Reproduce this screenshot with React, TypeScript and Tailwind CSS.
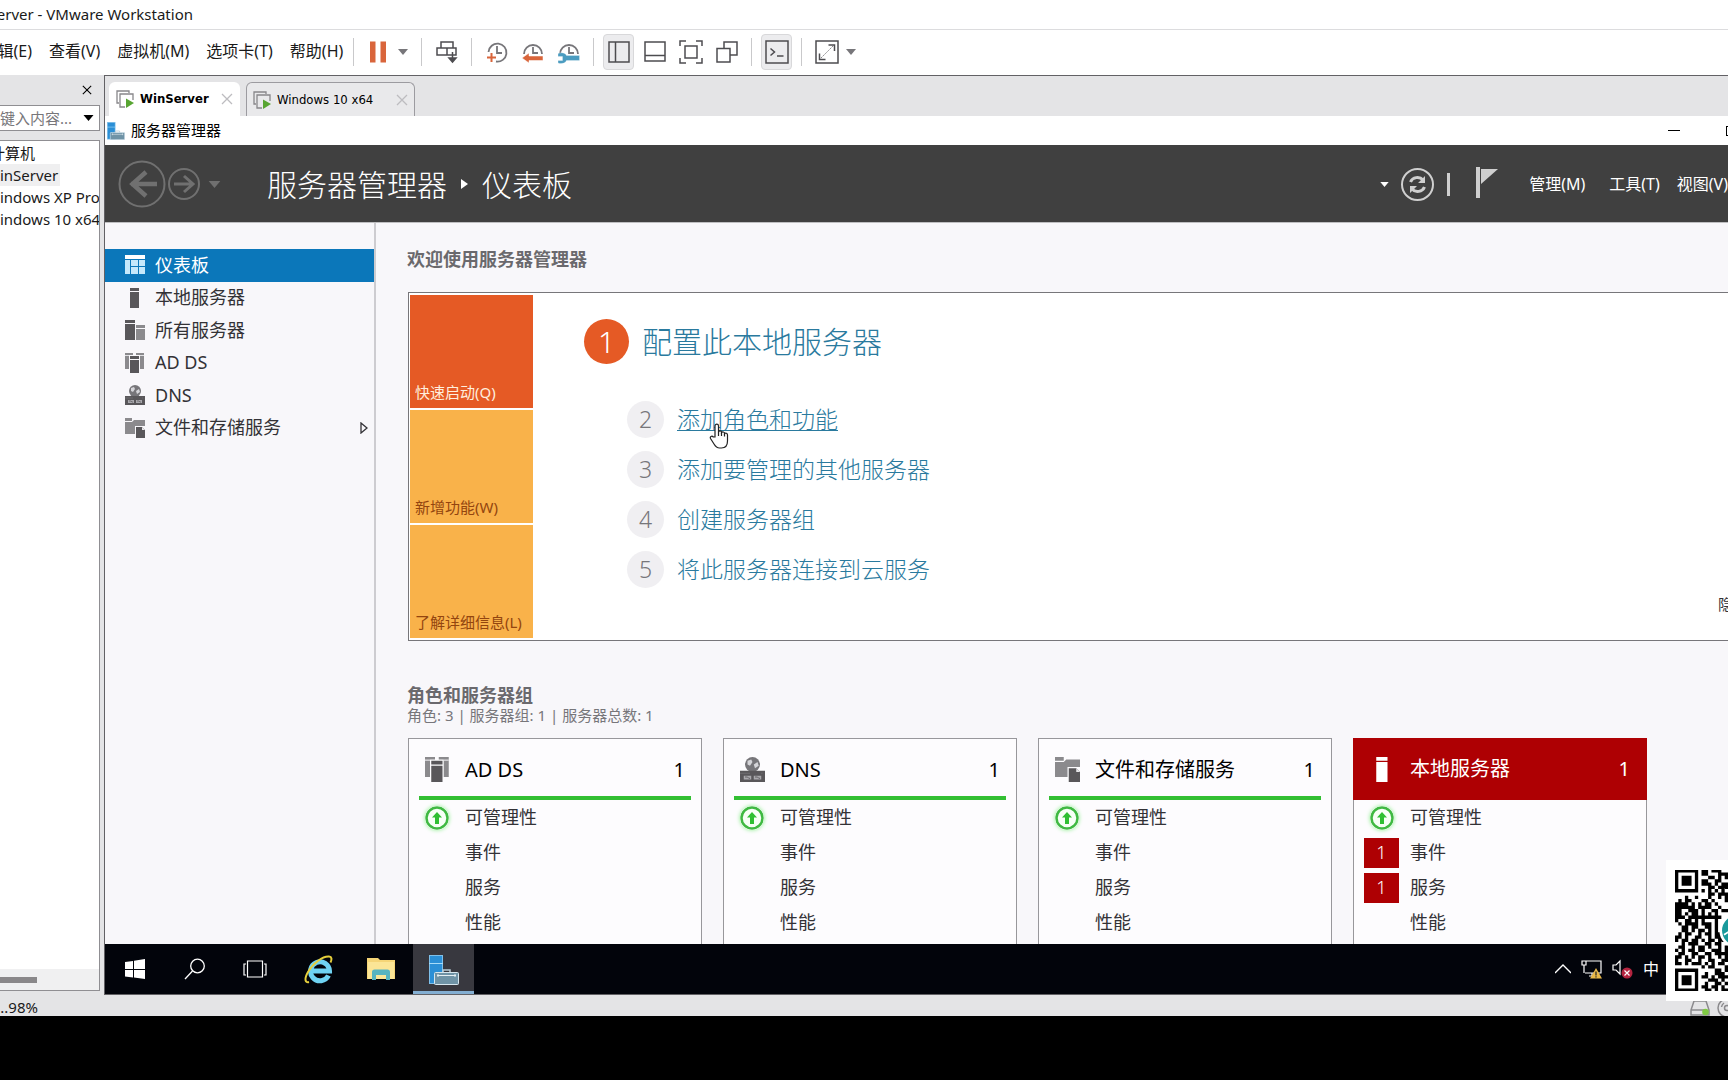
import type { ReactNode } from "react";
import { clsx } from "clsx";

type IconProps = { className?: string };

/* ---------- server manager icons ---------- */

function DashboardIcon({ className }: IconProps) {
  return (
    <svg className={className} viewBox="0 0 20 20" fill="#c5e8fb">
      <rect width="20" height="4" fill="#fff" />
      <rect y="5" width="5" height="14" />
      <rect x="6" y="5" width="7" height="6" />
      <rect x="14" y="5" width="6" height="6" />
      <rect x="6" y="12" width="7" height="7" />
      <rect x="14" y="12" width="6" height="7" />
    </svg>
  );
}

function ServerIcon({ className }: IconProps) {
  return (
    <svg className={className} viewBox="0 0 20 20" fill="currentColor">
      <rect x="5" width="9" height="3" />
      <rect x="5" y="4" width="9" height="16" />
    </svg>
  );
}

function ServersIcon({ className }: IconProps) {
  return (
    <svg className={className} viewBox="0 0 20 20">
      <g fill="#59575a">
        <rect width="10" height="3" />
        <rect y="4" width="10" height="16" />
      </g>
      <g fill="#8b8a8d">
        <rect x="11" y="5" width="9" height="3" />
        <rect x="11" y="9" width="9" height="11" />
      </g>
    </svg>
  );
}

function AdIcon({ className }: IconProps) {
  return (
    <svg className={className} viewBox="0 0 20 20">
      <g fill="#8b8a8d">
        <path d="M0 0h8v2H4v14H0zM0 3h4v1H0z" />
        <path d="M11 0h8v16h-4V2h-4z" />
      </g>
      <path d="M0 2.5h4M15 2.5h4" stroke="#f8f7fa" strokeWidth="0.8" />
      <rect x="5" y="3" width="9" height="3" fill="#59575a" />
      <rect x="5" y="7" width="9" height="13" fill="#59575a" />
    </svg>
  );
}

function DnsIcon({ className }: IconProps) {
  return (
    <svg className={className} viewBox="0 0 20 20">
      <circle cx="10" cy="6" r="6" fill="#77767a" />
      <path d="M6 3l3-1 1 2-2 3-2-1zM11 6l3-2 1 3-3 2z" fill="#d5d5d9" />
      <rect y="11" width="20" height="9" fill="#59575a" />
      <path d="M3 15h6v3H3zM11 15h6v3h-6z" fill="#a9a8ac" />
      <path d="M4 16h2l1 1h1M12 16h2l1 1h1" stroke="#59575a" strokeWidth="0.7" fill="none" />
      <path d="M0 13h8M17 13h1" stroke="#77767a" strokeWidth="0.6" />
    </svg>
  );
}

function StorageIcon({ className }: IconProps) {
  return (
    <svg className={className} viewBox="0 0 20 20">
      <path d="M0 0h7v3H0zM0 4h7l2-2h11v6h-10v8H0z" fill="#8b8a8d" />
      <path d="M11 9h6l3 3v8h-9z" fill="#59575a" />
      <path d="M17 9v3h3z" fill="#e8e7ea" />
    </svg>
  );
}

function ServerManagerIcon({ className }: IconProps) {
  return (
    <svg className={className} viewBox="0 0 30 30">
      <rect x="0.5" y="0.5" width="13" height="28" fill="#2b8fd6" stroke="#7fc0ea" />
      <path d="M0 8.500h14" stroke="#a8dcf8" />
      <path d="M14 18v-3h7v3" fill="none" stroke="#b9cdd8" strokeWidth="1.500" />
      <rect x="5.500" y="17.500" width="24" height="12" rx="1" fill="#6f93a6" stroke="#d6e6ee" />
      <path d="M8 20.500h19M9 22v-3M26 22v-3" stroke="#e4eff4" />
    </svg>
  );
}

function OnlineIcon() {
  return (
    <svg className="size-6 rounded-full shadow-[0_0_4px_#8df08d]" viewBox="0 0 24 24">
      <circle cx="12" cy="12" r="10.500" fill="#f6fff6" stroke="#3fb942" strokeWidth="2.500" />
      <path d="M12 6l5 5.500h-3V18h-4v-6.500H7z" fill="#2fbf33" />
    </svg>
  );
}

/* ---------- workstation toolbar icons ---------- */

function Caret({ className }: IconProps) {
  return (
    <svg className={className} viewBox="0 0 10 6" fill="currentColor">
      <path d="M0 0h10L5 6z" />
    </svg>
  );
}

function ToolIcon({ children }: { children: ReactNode }) {
  return (
    <svg className="size-6" viewBox="0 0 24 24" fill="none" stroke="#4d4c50" strokeWidth="1.500">
      {children}
    </svg>
  );
}

function ClockFace() {
  return (
    <>
      <path d="M3 14a9 9 0 1 1 18 0" stroke="#77767a" strokeWidth="1.800" />
      <path d="M12 7v6h5" stroke="#77767a" strokeWidth="1.800" />
    </>
  );
}

function PauseIcon() {
  return (
    <ToolIcon>
      <path d="M3 1.500h5.500v21H3zM13.500 1.500H19v21h-5.500z" fill="#d9653b" stroke="none" />
    </ToolIcon>
  );
}

function SendKeysIcon() {
  return (
    <ToolIcon>
      <path d="M6 8V2h12v6M2 8h19v7H2zM12 8v7" />
      <path d="M17.500 12v9M14 18l3.500 4 3.500-4z" fill="#4d4c50" />
    </ToolIcon>
  );
}

function SnapshotIcon() {
  return (
    <ToolIcon>
      <path d="M3.500 12a9 9 0 1 1 7.500 9.500" stroke="#77767a" strokeWidth="1.800" />
      <path d="M12 6v7h5" stroke="#77767a" strokeWidth="1.800" />
      <path d="M2 17.500h9M6.500 13v9" stroke="#d9653b" strokeWidth="2" />
    </ToolIcon>
  );
}

function RevertIcon() {
  return (
    <ToolIcon>
      <ClockFace />
      <path d="M1 18l7-5v3h14v4.500H8V23z" fill="#d9653b" stroke="#fff" strokeWidth="0.500" />
    </ToolIcon>
  );
}

function ManageIcon() {
  return (
    <ToolIcon>
      <ClockFace />
      <path
        d="M1 13.500c3.500-1.500 7.500-.5 8.500 2H22.500v5H9.500c-1 2.800-5 3.800-8.500 2.500v-2.500h4.500v-4H1z"
        fill="#4b9cc0"
        stroke="#fff"
        strokeWidth="0.300"
      />
    </ToolIcon>
  );
}

function LibraryIcon() {
  return (
    <ToolIcon>
      <path d="M2 2h20v20H2zM8.500 2v20" />
    </ToolIcon>
  );
}

function ThumbnailIcon() {
  return (
    <ToolIcon>
      <path d="M2 2h20v19H2zM2 15.500h20" />
    </ToolIcon>
  );
}

function FullscreenIcon() {
  return (
    <ToolIcon>
      <path d="M1 6V1h6M17 1h6v5M23 18v5h-6M7 23H1v-5M6 6h12v12H6z" />
    </ToolIcon>
  );
}

function UnityIcon() {
  return (
    <ToolIcon>
      <path d="M2 8.500h13V22H2zM9 8.500V2h13v13h-7" />
    </ToolIcon>
  );
}

function ConsoleIcon() {
  return (
    <ToolIcon>
      <path d="M1 1h22v22H1z" />
      <path d="M5.500 8.500l4 3.500-4 3.500M12 16h6.500" />
    </ToolIcon>
  );
}

function StretchIcon() {
  return (
    <ToolIcon>
      <path d="M1 1h22v22H1z" />
      <path d="M13.500 5h6v6M4.500 13.500v6h6" />
      <path d="M6 18L18 6" strokeWidth="1" strokeDasharray="2 1" stroke="#8b8a8d" />
    </ToolIcon>
  );
}

function VmIcon() {
  return (
    <svg className="size-[18px]" viewBox="0 0 18 18" fill="none" stroke="#88878a" strokeWidth="1.300">
      <path d="M3 13H1V1h12v2" />
      <path d="M9 17H4V4h13v6" />
      <path d="M10 8.500l8 4.500-8 5z" fill="#58a532" stroke="none" />
    </svg>
  );
}

function CloseIcon({ className }: IconProps) {
  return (
    <svg className={className} viewBox="0 0 12 12" fill="none" stroke="currentColor" strokeWidth="1.300">
      <path d="M1 1l10 10M11 1L1 11" />
    </svg>
  );
}

/* ---------- data ---------- */

const toolGroups: { label: string; icon: ReactNode; active?: boolean; menu?: boolean }[][] = [
  [{ label: "暂停", icon: <PauseIcon />, menu: true }],
  [{ label: "发送组合键", icon: <SendKeysIcon /> }],
  [
    { label: "拍摄快照", icon: <SnapshotIcon /> },
    { label: "恢复快照", icon: <RevertIcon /> },
    { label: "管理快照", icon: <ManageIcon /> },
  ],
  [
    { label: "显示库", icon: <LibraryIcon />, active: true },
    { label: "缩略图栏", icon: <ThumbnailIcon /> },
    { label: "全屏", icon: <FullscreenIcon /> },
    { label: "Unity", icon: <UnityIcon /> },
  ],
  [{ label: "控制台视图", icon: <ConsoleIcon />, active: true }],
  [{ label: "拉伸", icon: <StretchIcon />, menu: true }],
];

const navItems = [
  { label: "仪表板", Icon: DashboardIcon, active: true },
  { label: "本地服务器", Icon: ServerIcon },
  { label: "所有服务器", Icon: ServersIcon },
  { label: "AD DS", Icon: AdIcon },
  { label: "DNS", Icon: DnsIcon },
  { label: "文件和存储服务", Icon: StorageIcon, expandable: true },
];

const steps = [
  { n: 2, label: "添加角色和功能", hovered: true },
  { n: 3, label: "添加要管理的其他服务器" },
  { n: 4, label: "创建服务器组" },
  { n: 5, label: "将此服务器连接到云服务" },
];

const cards = [
  { title: "AD DS", Icon: AdIcon },
  { title: "DNS", Icon: DnsIcon },
  { title: "文件和存储服务", Icon: StorageIcon },
  { title: "本地服务器", Icon: ServerIcon, alert: true },
];

// left part of the code, the rest runs off the screen
const qrRows = [
  "#######.##.###..",
  "#.....#.##...###",
  "#.###.#...##.#.#",
  "#.###.#.##..##..",
  "#.###.#.###.#.##",
  "#.....#...##.###",
  "#######.#.#.#.#.",
  "..........##.###",
  "...#..#...#..#.#",
  ".#.##...##.#...#",
  "####.#.#.##.#...",
  "######.####..#..",
  "##..###.#..##.##",
  "##.#.##.#.#.#...",
  "###.##########..",
  "#..##.#.#...#...",
  ".#.####.###.#...",
  "..##.##..##.#...",
  "..##.#.##.#.#...",
  ".#.##..#.##.##..",
  "##.#..##..#.###.",
  "#.##.##.#.##.###",
  "..#.###..##.##..",
  ".##..#.##.#..#.#",
  "#.#.##.##..###.#",
  ".##..##..##.####",
  "##.#.#.##.#..#.#",
  "#..##..#..##..##",
  "##.#.###.#.#.##.",
  "........#.##...#",
  "#######.....##.#",
  "#.....#..#..###.",
  "#.###.#.##.#.###",
  "#.###.#...###.#.",
  "#.###.#..#..##.#",
  "#.....#.##.##.#.",
  "#######..##.#.##",
];

/* ---------- workstation chrome ---------- */

function Toolbar() {
  return (
    <div className="flex items-center">
      {toolGroups.map((group, i) => (
        <div key={i} className="flex items-center">
          <div className="h-7 w-px bg-[#c9c9cb]" />
          <div className="flex items-center gap-[5px] px-[9px]">
            {group.map((tool) => (
              <div key={tool.label} className="flex items-center">
                <button
                  aria-label={tool.label}
                  className={clsx(
                    "flex h-9 w-[31px] items-center justify-center rounded",
                    tool.active && "border border-[#d8d8da] bg-[#ececee]"
                  )}
                >
                  {tool.icon}
                </button>
                {tool.menu && (
                  <button aria-label={tool.label + "选项"} className="flex w-[18px] justify-center text-[#77767a]">
                    <Caret className="h-1.5 w-2.5" />
                  </button>
                )}
              </div>
            ))}
          </div>
        </div>
      ))}
    </div>
  );
}

function MenuBar() {
  return (
    <div className="flex h-[46px] shrink-0 items-center border-t border-[#dcdcde] bg-white pb-0.5">
      <div className="flex w-[353px] shrink-0 items-center gap-[17px] pb-px text-[16px] whitespace-nowrap text-[#1a1a1a]">
        <div className="flex w-8 justify-end overflow-hidden">
          <button className="shrink-0">编辑(E)</button>
        </div>
        <button>查看(V)</button>
        <button>虚拟机(M)</button>
        <button>选项卡(T)</button>
        <button>帮助(H)</button>
      </div>
      <Toolbar />
    </div>
  );
}

function Library() {
  return (
    <aside className="flex w-[104px] shrink-0 flex-col pr-1 pb-1 text-[15px] whitespace-nowrap">
      <div className="flex h-[30px] items-center justify-end pr-2">
        <button aria-label="关闭库">
          <CloseIcon className="size-2.5 text-black" />
        </button>
      </div>
      <div className="flex h-[26px] items-center border border-l-0 border-[#8f8e92] bg-white pr-[5px]">
        <input
          aria-label="在此处键入内容"
          placeholder="键入内容..."
          className="min-w-0 flex-1 text-[15px] outline-none placeholder:text-[#77767a]"
        />
        <button aria-label="展开搜索" className="text-black">
          <Caret className="h-1.5 w-[11px]" />
        </button>
      </div>
      <div className="mt-[9px] flex flex-1 flex-col overflow-hidden border border-l-0 border-[#8f8e92] bg-white">
        <ul className="-ml-3.5 flex-1 pt-px text-[#1a1a1a]">
          <li className="h-[22px] pl-1 leading-[22px]">计算机</li>
          <li className="h-[22px] leading-[22px]">
            <span className="inline-block bg-[#efeff0] pr-0.5">WinServer</span>
          </li>
          <li className="h-[22px] leading-[22px]">Windows XP Professional</li>
          <li className="h-[22px] leading-[22px]">Windows 10 x64</li>
        </ul>
        <div className="flex h-[21px] items-center bg-[#f0f0f1]">
          <div className="h-1.5 w-[37px] bg-[#8a888a]" />
        </div>
      </div>
    </aside>
  );
}

function VmTabs() {
  return (
    <div className="flex h-10 shrink-0 items-end gap-1.5 pl-1 font-['DejaVu_Sans_Condensed','DejaVu_Sans',sans-serif] text-[13px] whitespace-nowrap text-black">
      <div className="flex h-[34px] w-[131px] items-center rounded-t-md bg-white px-[7px]">
        <VmIcon />
        <button className="ml-1.5 font-bold">WinServer</button>
        <button aria-label="关闭 WinServer" className="ml-auto text-[#bdbcc0]">
          <CloseIcon className="size-3" />
        </button>
      </div>
      <div className="flex h-[34px] w-[169px] items-center rounded-t-md border border-b-0 border-[#9c9ba0] bg-[#e9e9eb] px-1.5">
        <VmIcon />
        <button className="ml-1.5">Windows 10 x64</button>
        <button aria-label="关闭 Windows 10 x64" className="ml-auto text-[#bdbcc0]">
          <CloseIcon className="size-3" />
        </button>
      </div>
    </div>
  );
}

/* ---------- guest: server manager ---------- */

function WindowTitle() {
  return (
    <div className="flex h-[29px] shrink-0 items-center overflow-hidden bg-white pl-0.5">
      <ServerManagerIcon className="size-[18px]" />
      <span className="ml-1.5 text-[15px] text-black">服务器管理器</span>
      <button aria-label="最小化" className="ml-auto flex h-full w-[58px] items-center pl-[11px]">
        <span className="h-px w-3 bg-black" />
      </button>
      <button aria-label="最大化" className="flex h-full w-[13px] shrink-0 items-center overflow-hidden pl-[11px]">
        <span className="h-2.5 w-2.5 shrink-0 border border-black" />
      </button>
    </div>
  );
}

function Banner() {
  return (
    <header className="flex h-[77px] shrink-0 items-center bg-[#404040] pt-px pl-[13px] text-white">
      <button aria-label="后退">
        <svg className="size-12" viewBox="0 0 48 48" fill="none" stroke="#707070">
          <circle cx="24" cy="24" r="22.500" strokeWidth="2" />
          <path d="M39 24H13M28 12L14.500 24 28 36" strokeWidth="4.500" />
        </svg>
      </button>
      <button aria-label="前进" className="ml-0.5">
        <svg className="size-8" viewBox="0 0 32 32" fill="none" stroke="#707070">
          <circle cx="16" cy="16" r="15" strokeWidth="2" />
          <path d="M6 16h18M16 8l9 8-9 8" strokeWidth="3" />
        </svg>
      </button>
      <button aria-label="历史记录" className="ml-2 text-[#707070]">
        <Caret className="h-[7px] w-[13px]" />
      </button>
      <h1 className="ml-[46px] flex items-center text-[30px] font-light">
        服务器管理器
        <svg className="mx-3.5 h-2.5 w-[7px]" viewBox="0 0 7 10" fill="#fff">
          <path d="M0 0l7 5-7 5z" />
        </svg>
        仪表板
      </h1>
      <div className="ml-auto flex items-center text-[16px] whitespace-nowrap">
        <Caret className="h-[5px] w-[9px]" />
        <button aria-label="刷新" className="ml-3">
          <svg className="size-[33px]" viewBox="0 0 33 33" fill="none" stroke="#cfcfcf">
            <circle cx="16.500" cy="16.500" r="15.500" strokeWidth="2" />
            <path d="M9.500 14c2-5 9-6 12.500-2M23.500 19c-2 5-9 6-12.500 2" strokeWidth="3" />
            <path d="M24 8v7h-7zM9 25v-7h7z" fill="#cfcfcf" stroke="none" />
          </svg>
        </button>
        <div className="ml-[13px] h-[23px] w-[3px] bg-[#cfcfcf]" />
        <button aria-label="通知" className="ml-[25px]">
          <svg className="h-9 w-6" viewBox="0 0 24 36" fill="#cfcfcf">
            <path d="M1 1h4v31H1zM6 3h17L6 18z" />
          </svg>
        </button>
        <button className="ml-[30px]">管理(M)</button>
        <button className="ml-6">工具(T)</button>
        <button className="ml-[17px]">视图(V)</button>
      </div>
    </header>
  );
}

function SideNav() {
  return (
    <nav className="w-[271px] shrink-0 border-r-2 border-[#cdccd0] pt-[26px]">
      <ul className="grid h-[195px] grid-rows-6">
        {navItems.map(({ label, Icon, active, expandable }) => (
          <li key={label}>
            <a
              href="#"
              className={clsx(
                "flex h-full items-center pl-5 text-[18px]",
                active ? "bg-[#0b77ba] text-white" : "text-[#333236]"
              )}
            >
              <Icon className="size-5 text-[#59575a]" />
              <span className="ml-2.5">{label}</span>
              {expandable && (
                <svg className="mr-1.5 ml-auto h-3 w-2" viewBox="0 0 8 12" fill="none" stroke="#333236" strokeWidth="1.300">
                  <path d="M1 1l6 5-6 5z" />
                </svg>
              )}
            </a>
          </li>
        ))}
      </ul>
    </nav>
  );
}

function HandCursor() {
  return (
    <svg className="absolute top-[21px] left-8 h-[26px] w-5" viewBox="0 0 20 26" fill="#fff" stroke="#222" strokeWidth="1.200">
      <path d="M6 14V3c0-2.500 3.500-2.500 3.500 0v6c.5-1.500 3-1.500 3 .5 1-1 3-.7 3 1 1-.8 3-.5 3 1.500v6c0 4-2 7-6 7h-2c-3 0-4-1.500-5.500-4L1.500 15.500c-1-2 1.500-3 2.800-1.500z" />
      <path d="M9.500 9v4M12.500 10v3M15.500 11v2.500" />
    </svg>
  );
}

function Tile({ className, children }: { className: string; children: ReactNode }) {
  return (
    <button className={clsx("flex h-[113px] items-end px-[5px] pb-[5px] text-left text-[15px] whitespace-nowrap", className)}>
      {children}
    </button>
  );
}

function Welcome() {
  return (
    <section>
      <h2 className="text-[18px] leading-6 font-bold text-[#6a696d]">欢迎使用服务器管理器</h2>
      <div className="mt-[21px] ml-px flex border border-r-0 border-[#77767a] bg-white">
        <div className="flex w-[124px] shrink-0 flex-col gap-0.5 py-0.5 pl-px">
          <Tile className="bg-[#e55a25] text-[#ffeedd]">快速启动(Q)</Tile>
          <Tile className="bg-[#f9b24a] text-[#93450f]">新增功能(W)</Tile>
          <Tile className="bg-[#f9b24a] text-[#93450f]">了解详细信息(L)</Tile>
        </div>
        <div className="pt-[26px] pl-[51px] font-light text-[#2a7a9e]">
          <a href="#" className="flex items-center gap-[13px] text-[30px] leading-[45px]">
            <span className="flex size-[45px] items-center justify-center rounded-full bg-[#e55a25] text-white">
              1
            </span>
            配置此本地服务器
          </a>
          <ol className="mt-[30px] ml-[43px]">
            {steps.map(({ n, label, hovered }) => (
              <li key={n} className="flex h-[50px] items-center gap-[13px] text-[23px]">
                <span className="flex size-[37px] items-center justify-center rounded-full bg-[#f0eff2] text-[#77767a]">
                  {n}
                </span>
                <a href="#" className={clsx("relative", hovered && "underline decoration-1 underline-offset-2")}>
                  {label}
                  {hovered && <HandCursor />}
                </a>
              </li>
            ))}
          </ol>
        </div>
        <button className="mt-auto mb-[25px] ml-auto w-2.5 overflow-hidden text-[15px] whitespace-nowrap text-[#333236]">
          隐藏
        </button>
      </div>
    </section>
  );
}

function Card({ title, Icon, alert }: (typeof cards)[number]) {
  const rows = ["可管理性", "事件", "服务", "性能"];
  return (
    <article className="h-60 w-[294px] shrink-0 border border-[#98979b] bg-[#fdfcfe]">
      <div
        className={clsx(
          "flex items-center text-[20px]",
          alert ? "-m-px mb-0 h-[62px] bg-[#ae0003] px-[17px] text-white" : "h-[61px] px-4 text-black"
        )}
      >
        <Icon className={clsx("size-[25px]", alert && "text-white")} />
        <h3 className="ml-[15px]">{title}</h3>
        <span className="ml-auto">1</span>
      </div>
      {!alert && <div className="mx-2.5 -mt-1 h-1 bg-[#33bf33]" />}
      <ul>
        {rows.map((row, i) => (
          <li key={row} className="flex h-[35px] items-center text-[18px] text-[#333236]">
            <div className="ml-2.5 flex h-[30px] w-[35px] items-center justify-center">
              {i === 0 && <OnlineIcon />}
              {alert && (i === 1 || i === 2) && (
                <span className="flex size-full items-center justify-center bg-[#ae0003] font-light text-white">1</span>
              )}
            </div>
            <span className="ml-[11px]">{row}</span>
          </li>
        ))}
      </ul>
    </article>
  );
}

function Taskbar() {
  return (
    <footer className="flex h-[50px] shrink-0 items-center bg-[#02040b] pr-[68px]">
      <button aria-label="开始" className="flex w-[60px] justify-center">
        <svg className="size-5" viewBox="0 0 20 20" fill="#fff">
          <path d="M0 3l8-1v8H0zM9 1.800L20 0v10H9zM0 11h8v7.500l-8-1zM9 11h11v9L9 18.500z" />
        </svg>
      </button>
      <button aria-label="搜索" className="flex w-[60px] justify-center">
        <svg className="size-[22px]" viewBox="0 0 22 22" fill="none" stroke="#fff" strokeWidth="1.300">
          <circle cx="13.500" cy="8" r="6.800" />
          <path d="M8.500 13L1 21" />
        </svg>
      </button>
      <button aria-label="任务视图" className="flex w-[60px] justify-center">
        <svg className="h-[18px] w-6" viewBox="0 0 24 18" fill="none" stroke="#fff" strokeWidth="1.200">
          <path d="M4.500 1h15v16h-15zM3 4H1v11h2M21 4h2v11h-2" />
        </svg>
      </button>
      <button aria-label="Internet Explorer" className="flex w-[66px] justify-center">
        <svg className="size-[29px]" viewBox="0 0 29 29" fill="none">
          <path d="M24.500 20.500a9.500 9.500 0 1 1 1-4.500H9" stroke="#6fd3f3" strokeWidth="5" />
          <path d="M5 27c-4 1-5-3-1-10C9 8 19 1 25 1.500c3 .3 3 3 1.500 6" stroke="#e6cf3c" strokeWidth="2" />
        </svg>
      </button>
      <button aria-label="文件资源管理器" className="flex w-[60px] justify-center">
        <svg className="h-6 w-7" viewBox="0 0 28 24">
          <path d="M0 1h11l2 2h15v19H0z" fill="#f5d577" />
          <path d="M1 5h26v17H1z" fill="#fbe596" />
          <path d="M5 23V15q0-2.500 2.500-2.500h13q2.500 0 2.500 2.500v8h-4v-5H9v5z" fill="#57b4c0" />
        </svg>
      </button>
      <button aria-label="服务器管理器" className="ml-0.5 flex h-full w-[61px] justify-center border-b-[3px] border-[#83aed2] bg-[#38383f] pt-[11px]">
        <ServerManagerIcon className="size-[30px]" />
      </button>
      <div className="mr-px ml-auto flex items-center gap-2.5 text-white">
        <button aria-label="显示隐藏的图标">
          <svg className="h-2.5 w-4" viewBox="0 0 16 10" fill="none" stroke="#fff" strokeWidth="1.300">
            <path d="M0 9l8-8 8 8" />
          </svg>
        </button>
        <button aria-label="网络">
          <svg className="h-5 w-[21px]" viewBox="0 0 21 20" fill="none" stroke="#fff" strokeWidth="1.200">
            <path d="M5 2h15v12H4M1 2h4v4H1zM3 6v8M8 17h7M11 14v3" />
            <path d="M15 9l6 10.500H9z" fill="#e9b949" stroke="none" />
            <path d="M15 12.500v4M15 17.300v1.200" stroke="#222" />
          </svg>
        </button>
        <button aria-label="音量">
          <svg className="h-5 w-[21px]" viewBox="0 0 21 20" fill="none" stroke="#fff" strokeWidth="1.200">
            <path d="M1 6h3l4-4v13l-4-4H1z" />
            <circle cx="15" cy="14" r="5.500" fill="#b3243f" stroke="none" />
            <path d="M12.500 11.500l5 5M17.500 11.500l-5 5" />
          </svg>
        </button>
        <button className="text-base">中</button>
      </div>
    </footer>
  );
}

function QrCode() {
  const d = qrRows
    .flatMap((row, y) => [...row].map((c, x) => (c === "#" ? `M${x} ${y}h1v1h-1z` : "")))
    .join("");
  return (
    <div className="absolute right-0 bottom-[15px] flex h-[141px] w-[62px] items-center overflow-hidden bg-white pl-[9px]">
      <svg className="h-[121px] w-[53px] shrink-0" viewBox="0 0 16 37" preserveAspectRatio="xMinYMid slice">
        <path d={d} fill="#000" />
        <circle cx="18.700" cy="18.500" r="5.300" fill="#fff" />
        <circle cx="18.700" cy="18.500" r="4.500" fill="#199a9c" />
        <path d="M14.800 19.800l1.500-1" stroke="#fff" strokeWidth="0.500" />
      </svg>
    </div>
  );
}

function StatusBar() {
  return (
    <div className="flex h-[21px] shrink-0 items-center overflow-hidden text-[15px] text-[#1a1a1a]">
      <div className="flex w-[38px] justify-end overflow-hidden pt-1 whitespace-nowrap">...98%</div>
      <div className="ml-auto flex h-full items-start gap-[7px] overflow-hidden pt-1">
        <svg className="h-5 w-5" viewBox="0 0 20 20" fill="none" stroke="#8b8a8d" strokeWidth="1.500">
          <path d="M1 16V11L4 2h12l3 9v5zM1 11h13" />
          <circle cx="15.500" cy="13" r="3.300" fill="#7fc943" stroke="none" />
        </svg>
        <svg className="h-5 w-[11px]" viewBox="0 0 11 20" fill="none" stroke="#8b8a8d" strokeWidth="1.500">
          <circle cx="10" cy="9" r="9" />
          <circle cx="10" cy="9" r="2.500" />
          <path d="M4.500 8a6 6 0 0 1 2.500-4" />
        </svg>
      </div>
    </div>
  );
}

export default function App() {
  return (
    <div className="flex h-screen flex-col overflow-hidden bg-black pb-16 font-['Noto_Sans','Noto_Sans_CJK_SC',sans-serif]">
      <div className="relative flex min-h-0 flex-1 flex-col bg-[#e4e4e6]">
        <div className="flex h-[29px] shrink-0 items-center bg-white text-[15px] text-[#1a1a1a]">
          <div className="flex w-[193px] justify-end overflow-hidden whitespace-nowrap">
            <span className="shrink-0">WinServer - VMware Workstation</span>
          </div>
        </div>
        <MenuBar />
        <div className="flex min-h-0 flex-1">
          <Library />
          <main className="flex min-w-0 flex-1 flex-col border border-r-0 border-[#626165]">
            <VmTabs />
            <WindowTitle />
            <Banner />
            <div className="flex min-h-0 flex-1 overflow-hidden border-t border-[#bfbfc1] bg-[#f8f7fa]">
              <SideNav />
              <div className="min-w-0 flex-1 pt-6 pl-[31px]">
                <Welcome />
                <section className="mt-[42px]">
                  <h2 className="text-[18px] leading-6 font-bold text-[#6a696d]">角色和服务器组</h2>
                  <p className="text-[15px] leading-4 text-[#77767a]">角色: 3 | 服务器组: 1 | 服务器总数: 1</p>
                  <div className="mt-[15px] flex gap-[21px] pl-px">
                    {cards.map((card) => (
                      <Card key={card.title} {...card} />
                    ))}
                  </div>
                </section>
              </div>
            </div>
            <Taskbar />
          </main>
        </div>
        <StatusBar />
        <QrCode />
      </div>
    </div>
  );
}
